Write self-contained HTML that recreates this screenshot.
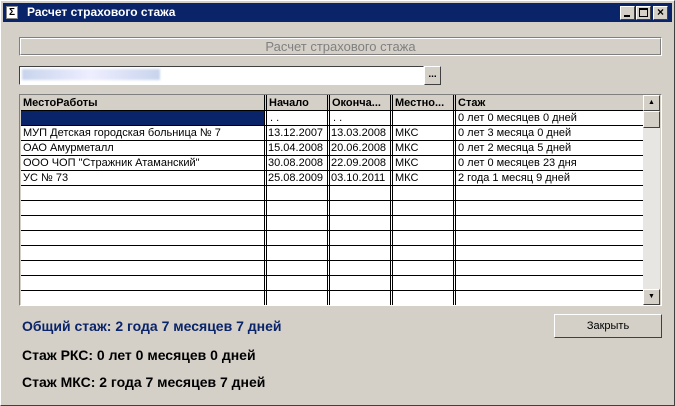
<!DOCTYPE html>
<html><head><meta charset="utf-8"><style>
*{margin:0;padding:0;box-sizing:border-box}
body{width:675px;height:406px;background:#d4d0c8;position:relative;overflow:hidden;font-family:"Liberation Sans",sans-serif}
.a{position:absolute}
.hl{position:absolute;left:21px;width:622px;height:1px;background:#000}
.vl{position:absolute;top:95px;height:210px;width:1px;background:#000}
.t{position:absolute;font-size:11px;color:#000;white-space:nowrap;line-height:15px;margin-top:1px}
.h{font-weight:bold}
</style></head><body>
<div class="a" style="left:0;top:0;width:675px;height:406px;border:1px solid #fff;border-right-color:#404040;border-bottom-color:#404040"></div>
<div class="a" style="left:3px;top:3px;width:669px;height:19px;background:#0a246a"></div>
<div class="a" style="left:6px;top:6px;width:12px;height:13px;background:#fff;border:1px solid #888;font-size:10px;line-height:11px;text-align:center;font-weight:bold">Σ</div>
<div class="a" style="left:27px;top:5px;color:#fff;font-weight:bold;font-size:12px">Расчет страхового стажа</div>
<div class="a" style="left:620px;top:6px;width:15px;height:14px;background:#d4d0c8;border:1px solid #fff;border-right-color:#404040;border-bottom-color:#404040"><div class="a" style="left:3px;top:8px;width:6px;height:2px;background:#000"></div></div>
<div class="a" style="left:636px;top:6px;width:15px;height:14px;background:#d4d0c8;border:1px solid #fff;border-right-color:#404040;border-bottom-color:#404040"><div class="a" style="left:2px;top:1px;width:9px;height:9px;border:1px solid #000;border-top-width:2px"></div></div>
<div class="a" style="left:653px;top:6px;width:15px;height:14px;background:#d4d0c8;border:1px solid #fff;border-right-color:#404040;border-bottom-color:#404040;font-size:12px;line-height:11px;text-align:center;font-weight:bold">×</div>
<div class="a" style="left:19px;top:37px;width:643px;height:19px;border:1px solid #808080;border-right-color:#fff;border-bottom-color:#fff"><div style="width:100%;height:100%;border:1px solid #fff;border-right-color:#808080;border-bottom-color:#808080;text-align:center;color:#808080;font-size:13px;line-height:15px">Расчет страхового стажа</div></div>
<div class="a" style="left:19px;top:66px;width:405px;height:19px;background:#fff;border:1px solid #404040;border-right-color:#fff;border-bottom-color:#fff"></div>
<div class="a" style="left:22px;top:69px;width:138px;height:11px;background:linear-gradient(90deg,#c8d4ec,#eef 50%,#c8d4ec);filter:blur(1px)"></div>
<div class="a" style="left:424px;top:66px;width:17px;height:19px;background:#d4d0c8;border:1px solid #fff;border-right-color:#404040;border-bottom-color:#404040;font-size:10px;text-align:center;line-height:16px;font-weight:bold">...</div>
<div class="a" style="left:19px;top:94px;width:643px;height:212px;border:1px solid #808080;border-right-color:#fff;border-bottom-color:#fff"></div>
<div class="a" style="left:21px;top:95px;width:622px;height:210px;background:#fff"></div>
<div class="a" style="left:21px;top:95px;width:622px;height:15px;background:#d4d0c8"></div>
<div class="a" style="left:21px;top:111px;width:243px;height:14px;background:#0a246a"></div>
<div class="hl" style="top:110px"></div><div class="hl" style="top:125px"></div><div class="hl" style="top:140px"></div><div class="hl" style="top:155px"></div><div class="hl" style="top:170px"></div><div class="hl" style="top:185px"></div><div class="hl" style="top:200px"></div><div class="hl" style="top:215px"></div><div class="hl" style="top:230px"></div><div class="hl" style="top:245px"></div><div class="hl" style="top:260px"></div><div class="hl" style="top:275px"></div><div class="hl" style="top:290px"></div>
<div class="vl" style="left:264px"></div><div class="vl" style="left:266px"></div>
<div class="vl" style="left:327px"></div><div class="vl" style="left:329px"></div>
<div class="vl" style="left:390px"></div><div class="vl" style="left:392px"></div>
<div class="vl" style="left:453px"></div><div class="vl" style="left:455px"></div>
<div class="t h" style="left:23px;top:95px">МестоРаботы</div>
<div class="t h" style="left:269px;top:95px">Начало</div>
<div class="t h" style="left:332px;top:95px">Оконча...</div>
<div class="t h" style="left:395px;top:95px">Местно...</div>
<div class="t h" style="left:458px;top:95px">Стаж</div>
<div class="t" style="left:270px;top:110px">. .</div><div class="t" style="left:333px;top:110px">. .</div><div class="t" style="left:458px;top:110px">0 лет 0 месяцев 0 дней</div>
<div class="t" style="left:23px;top:125px">МУП Детская городская больница № 7</div><div class="t" style="left:268px;top:125px">13.12.2007</div><div class="t" style="left:331px;top:125px">13.03.2008</div><div class="t" style="left:395px;top:125px">МКС</div><div class="t" style="left:458px;top:125px">0 лет 3 месяца 0 дней</div>
<div class="t" style="left:23px;top:140px">ОАО Амурметалл</div><div class="t" style="left:268px;top:140px">15.04.2008</div><div class="t" style="left:331px;top:140px">20.06.2008</div><div class="t" style="left:395px;top:140px">МКС</div><div class="t" style="left:458px;top:140px">0 лет 2 месяца 5 дней</div>
<div class="t" style="left:23px;top:155px">ООО ЧОП "Стражник Атаманский"</div><div class="t" style="left:268px;top:155px">30.08.2008</div><div class="t" style="left:331px;top:155px">22.09.2008</div><div class="t" style="left:395px;top:155px">МКС</div><div class="t" style="left:458px;top:155px">0 лет 0 месяцев 23 дня</div>
<div class="t" style="left:23px;top:170px">УС № 73</div><div class="t" style="left:268px;top:170px">25.08.2009</div><div class="t" style="left:331px;top:170px">03.10.2011</div><div class="t" style="left:395px;top:170px">МКС</div><div class="t" style="left:458px;top:170px">2 года 1 месяц 9 дней</div>
<div class="a" style="left:643px;top:95px;width:17px;height:210px;background:#e8e6e2"></div>
<div class="a" style="left:643px;top:95px;width:17px;height:16px;background:#d4d0c8;border:1px solid #fff;border-right-color:#404040;border-bottom-color:#404040;font-size:7px;text-align:center;line-height:14px">▲</div>
<div class="a" style="left:643px;top:111px;width:17px;height:17px;background:#d4d0c8;border:1px solid #fff;border-right-color:#404040;border-bottom-color:#404040"></div>
<div class="a" style="left:643px;top:289px;width:17px;height:16px;background:#d4d0c8;border:1px solid #fff;border-right-color:#404040;border-bottom-color:#404040;font-size:7px;text-align:center;line-height:14px">▼</div>
<div class="a" style="left:554px;top:314px;width:108px;height:24px;background:#d4d0c8;border:1px solid #fff;border-right-color:#404040;border-bottom-color:#404040;font-size:11px;text-align:center;line-height:22px">Закрыть</div>
<div class="a" style="left:22px;top:318px;font-size:14px;font-weight:bold;color:#0a246a">Общий стаж: 2 года 7 месяцев 7 дней</div>
<div class="a" style="left:22px;top:347px;font-size:14px;font-weight:bold;color:#000">Стаж РКС: 0 лет 0 месяцев 0 дней</div>
<div class="a" style="left:22px;top:374px;font-size:14px;font-weight:bold;color:#000">Стаж МКС: 2 года 7 месяцев 7 дней</div>
</body></html>
